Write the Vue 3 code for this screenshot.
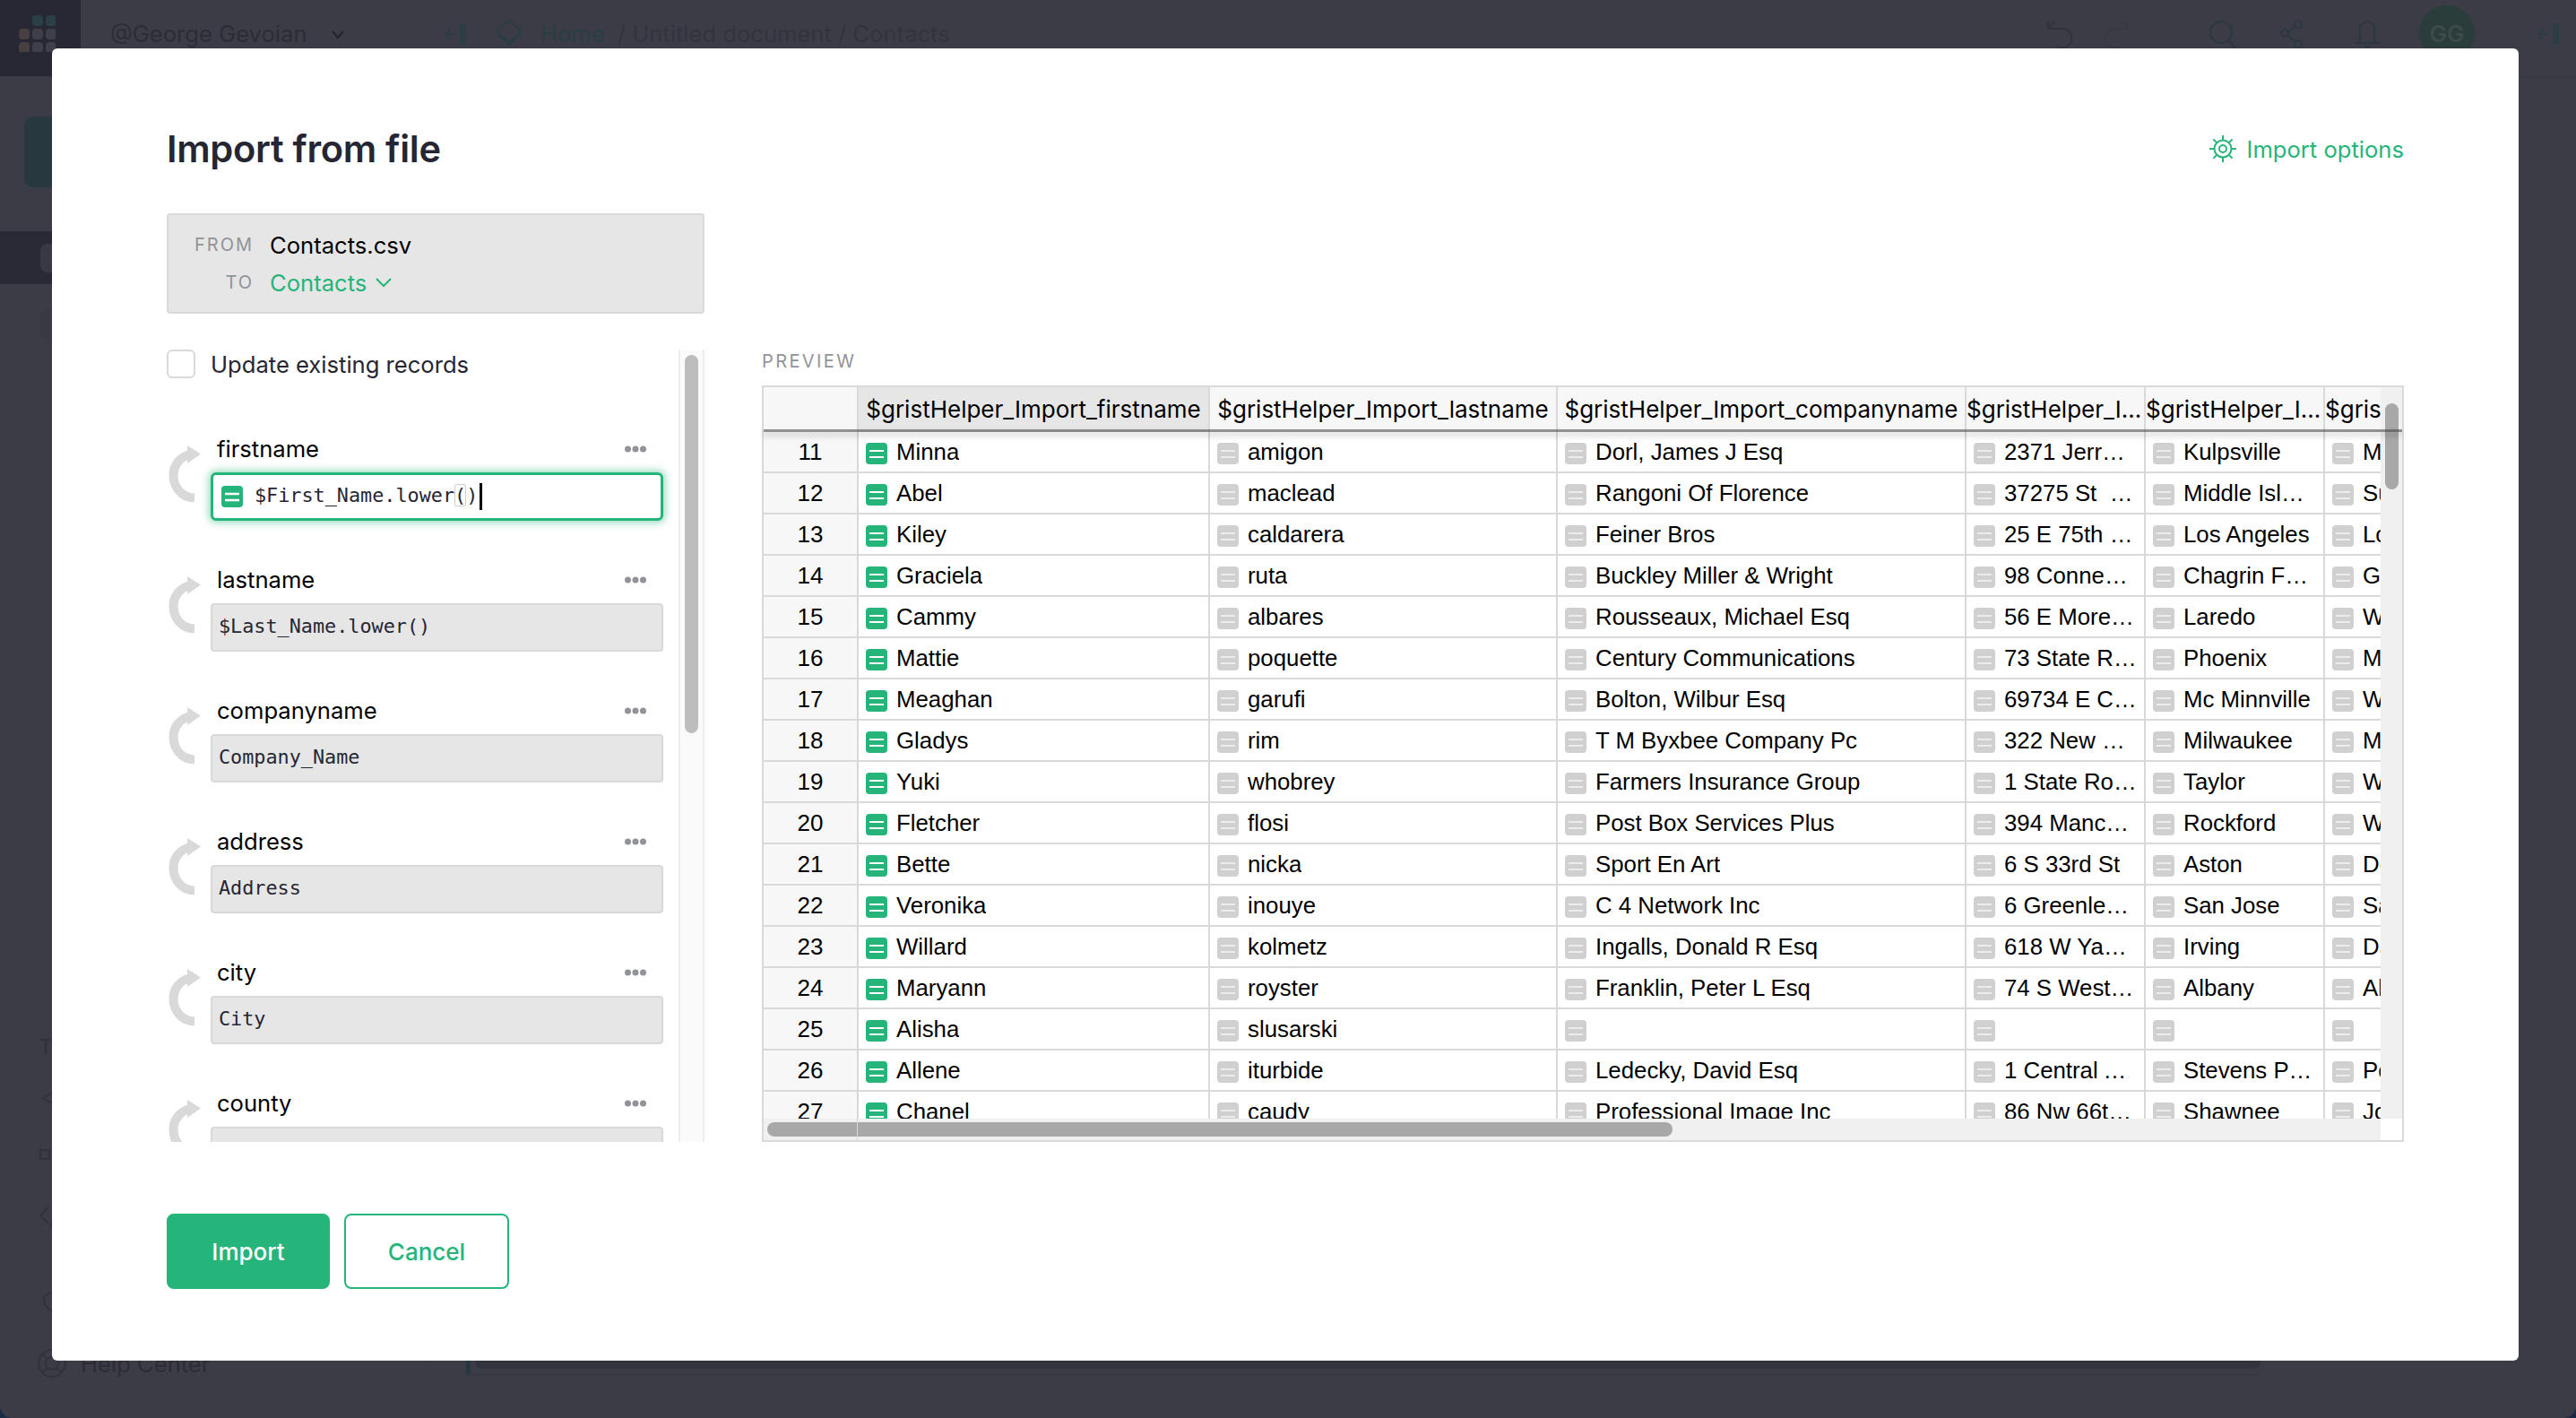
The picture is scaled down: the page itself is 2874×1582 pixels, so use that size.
<script setup>
const fields = [
  { name: 'firstname', formula: '$First_Name.lower()', active: true },
  { name: 'lastname', formula: '$Last_Name.lower()' },
  { name: 'companyname', formula: 'Company_Name' },
  { name: 'address', formula: 'Address' },
  { name: 'city', formula: 'City' },
  { name: 'county', formula: 'County' }
]

const columns = [
  { title: '$gristHelper_Import_firstname', width: 392 },
  { title: '$gristHelper_Import_lastname', width: 388 },
  { title: '$gristHelper_Import_companyname', width: 456 },
  { title: '$gristHelper_Import_address', width: 200 },
  { title: '$gristHelper_Import_city', width: 200 },
  { title: '$gristHelper_Import_county', width: 200 }
]

const rows = [
  ['Minna', 'amigon', 'Dorl, James J Esq', '2371 Jerrold Ave', 'Kulpsville', 'Montgomery'],
  ['Abel', 'maclead', 'Rangoni Of Florence', '37275 St  Rt 17m M', 'Middle Island', 'Suffolk'],
  ['Kiley', 'caldarera', 'Feiner Bros', '25 E 75th St #69', 'Los Angeles', 'Los Angeles'],
  ['Graciela', 'ruta', 'Buckley Miller & Wright', '98 Connecticut Ave Nw', 'Chagrin Falls', 'Geauga'],
  ['Cammy', 'albares', 'Rousseaux, Michael Esq', '56 E Morehead St', 'Laredo', 'Webb'],
  ['Mattie', 'poquette', 'Century Communications', '73 State Road 434 E', 'Phoenix', 'Maricopa'],
  ['Meaghan', 'garufi', 'Bolton, Wilbur Esq', '69734 E Carrillo St', 'Mc Minnville', 'Warren'],
  ['Gladys', 'rim', 'T M Byxbee Company Pc', '322 New Horizon Blvd', 'Milwaukee', 'Milwaukee'],
  ['Yuki', 'whobrey', 'Farmers Insurance Group', '1 State Route 27', 'Taylor', 'Wayne'],
  ['Fletcher', 'flosi', 'Post Box Services Plus', '394 Manchester Blvd', 'Rockford', 'Winnebago'],
  ['Bette', 'nicka', 'Sport En Art', '6 S 33rd St', 'Aston', 'Delaware'],
  ['Veronika', 'inouye', 'C 4 Network Inc', '6 Greenleaf Ave', 'San Jose', 'Santa Clara'],
  ['Willard', 'kolmetz', 'Ingalls, Donald R Esq', '618 W Yakima Ave', 'Irving', 'Dallas'],
  ['Maryann', 'royster', 'Franklin, Peter L Esq', '74 S Westgate St', 'Albany', 'Albany'],
  ['Alisha', 'slusarski', '', '', '', ''],
  ['Allene', 'iturbide', 'Ledecky, David Esq', '1 Central Ave', 'Stevens Point', 'Portage'],
  ['Chanel', 'caudy', 'Professional Image Inc', '86 Nw 66th St #8673', 'Shawnee', 'Johnson']
]
</script>

<template>
  <div class="page">
    <!-- dimmed app behind the dialog -->
    <div class="app-top">
      <div class="logo-cell">
        <svg class="logo" width="41" height="41" viewBox="0 0 41 41">
          <rect x="15" y="0" width="12" height="12" rx="4" fill="#2b3f47" />
          <rect x="30" y="0" width="12" height="12" rx="4" fill="#2b3f47" />
          <rect x="0" y="15" width="12" height="12" rx="4" fill="#473f40" />
          <rect x="15" y="15" width="12" height="12" rx="4" fill="#3f3f4a" />
          <rect x="30" y="15" width="12" height="12" rx="4" fill="#3f3f4a" />
          <rect x="0" y="30" width="12" height="12" rx="4" fill="#473f40" />
          <rect x="15" y="30" width="12" height="12" rx="4" fill="#3f3f4a" />
          <rect x="30" y="30" width="12" height="12" rx="4" fill="#3f3f4a" />
        </svg>
      </div>
      <div class="org">
        <span>@George Gevoian</span>
        <svg width="14" height="10" viewBox="0 0 14 10" fill="none" stroke="#23232c" stroke-width="2"><path d="M1 1l6 7 6-7" /></svg>
      </div>
      <div class="crumbs">
        <svg width="24" height="24" viewBox="0 0 24 24" fill="none" stroke="#2a3d42" stroke-width="2"><path d="M12 12H1M6 6l-5 6 5 6" /><rect x="17" y="0" width="7" height="24" fill="#2a3d42" stroke="none" /></svg>
        <svg class="doc-ico" width="32" height="30" viewBox="0 0 32 30" fill="none" stroke="#2a3d42" stroke-width="2"><path d="M16 1l14 12-14 12L2 13z" /><path d="M4 17l12 11 12-11" /></svg>
        <span class="home">Home</span>
        <span>/ Untitled document / Contacts</span>
      </div>
      <div class="top-tools">
        <svg width="30" height="32" viewBox="0 0 30 32" fill="none" stroke="#32323c" stroke-width="2"><path d="M2 10h16a10 10 0 0 1 0 21h-6M2 10l7-8M2 10v-8" /></svg>
        <svg class="redo" width="28" height="32" viewBox="0 0 28 32" fill="none" stroke="#383841" stroke-width="2"><path d="M26 10H11a10 10 0 0 0 0 21h6M26 10l-7-8M26 10v-8" /></svg>
        <svg class="search" width="32" height="32" viewBox="0 0 32 32" fill="none" stroke="#2c3840" stroke-width="2"><circle cx="14" cy="14" r="12" /><path d="M22 23l8 9" /></svg>
        <svg class="share" width="28" height="32" viewBox="0 0 28 32" fill="none" stroke="#2c3840" stroke-width="2"><circle cx="21" cy="5" r="4" /><circle cx="6" cy="15" r="4" /><circle cx="21" cy="27" r="4" /><path d="M10 13l8-6M10 18l8 7" /></svg>
        <svg class="bell" width="32" height="32" viewBox="0 0 32 32" fill="none" stroke="#2c3840" stroke-width="2"><path d="M8 26V10a8 8 0 0 1 16 0v16M2 26h28M13 30h6" /></svg>
        <div class="avatar">GG</div>
        <svg class="collapse" width="24" height="24" viewBox="0 0 24 24" fill="none" stroke="#2a3d42" stroke-width="2"><path d="M12 12H1M6 6l-5 6 5 6" /><rect x="17" y="0" width="7" height="24" fill="#2a3d42" stroke="none" /></svg>
      </div>
    </div>
    <div class="app-side">
      <div class="new-btn"></div>
      <div class="nav-row selected"><div class="nav-ico"></div></div>
      <div class="nav-row"><div class="nav-ico"></div></div>
      <div class="side-low">
        <svg width="14" height="18" viewBox="0 0 14 18" fill="none" stroke="#32323c" stroke-width="3"><path d="M1 2h12M7 2v16" /></svg>
        <svg class="eye" width="40" height="24" viewBox="0 0 40 24" fill="none" stroke="#32323c" stroke-width="2"><path d="M1 12q14-12 38 0q-24 12-38 0z" /><circle cx="24" cy="12" r="6" /></svg>
        <svg width="34" height="30" viewBox="0 0 34 30" fill="none" stroke="#32323c" stroke-width="2"><rect x="1" y="9" width="10" height="10" /><path d="M16 0v30" /></svg>
        <svg width="34" height="30" viewBox="0 0 34 30" fill="none" stroke="#32323c" stroke-width="2"><path d="M10 6L1 15l9 9M18 2l-6 28" /></svg>
        <svg class="bulb" width="40" height="38" viewBox="0 0 40 38" fill="none" stroke="#32323c" stroke-width="2"><path d="M2 10q16-14 38-2M2 10q0 14 12 16h26" /></svg>
        <div class="help-row">
          <svg width="32" height="40" viewBox="0 0 32 40" fill="none" stroke="#32323c" stroke-width="2"><circle cx="16" cy="20" r="15" /><circle cx="16" cy="20" r="7" /><path d="M5 9l6 6M27 9l-6 6M5 31l6-6M27 31l-6-6" /></svg>
          <span>Help Center</span>
        </div>
      </div>
    </div>
    <div class="app-bottom-band"><span class="band-edge"></span><span class="band"></span></div>

    <!-- dialog -->
    <div class="modal">
      <div class="modal-head">
        <h1 class="title">Import from file</h1>
        <div class="options">
          <svg width="30" height="30" viewBox="0 0 30 30" fill="none" stroke="#25b47a" stroke-width="2">
            <circle cx="15" cy="15" r="9.5" />
            <circle cx="15" cy="15" r="4" />
            <path d="M15 0v5M15 25v5M0 15h5M25 15h5M4.4 4.4l3.5 3.5M22.1 22.1l3.5 3.5M4.4 25.6l3.5-3.5M22.1 7.900l3.500-3.500" />
          </svg>
          <span>Import options</span>
        </div>
      </div>

      <div class="source-box">
        <div class="source-row">
          <span class="source-key">FROM</span>
          <span>Contacts.csv</span>
        </div>
        <div class="source-row">
          <span class="source-key">TO</span>
          <span class="source-target">Contacts</span>
          <svg width="20" height="12" viewBox="0 0 20 12" fill="none" stroke="#25b47a" stroke-width="2"><path d="M2 2l8 8 8-8" /></svg>
        </div>
      </div>

      <div class="body">
        <div class="left-panel">
          <div class="left-scroll">
            <label class="update-row">
              <span class="checkbox"></span>
              <span>Update existing records</span>
            </label>
            <div v-for="field in fields" :key="field.name" class="field">
              <svg class="field-arrow" width="36" height="64" viewBox="0 0 36 64" fill="none">
                <path d="M29 58.500C14 58 5.500 46 5.500 33C5.500 23 12 13 24 10" stroke="#d9d9d9" stroke-width="10" />
                <path d="M21 0L36 9.500L21 20z" fill="#d9d9d9" />
              </svg>
              <div class="field-main">
                <div class="field-head">
                  <span>{{ field.name }}</span>
                  <svg width="24" height="8" viewBox="0 0 24 8" fill="#929299"><circle cx="3.500" cy="4" r="3.500" /><circle cx="12" cy="4" r="3.500" /><circle cx="20.500" cy="4" r="3.500" /></svg>
                </div>
                <div v-if="field.active" class="formula formula-active">
                  <svg class="eq-ico" width="24" height="24" viewBox="0 0 24 24"><rect width="24" height="24" rx="4" fill="#25b47a" /><path d="M4 9h16M4 16h16" stroke="#fff" stroke-width="2.500" /></svg>
                  <span class="code">$First_Name.lower<span class="paren">(</span>)</span><span class="cursor"></span>
                </div>
                <div v-else class="formula code">{{ field.formula }}</div>
              </div>
            </div>
          </div>
          <div class="left-track"><div class="left-thumb"></div></div>
        </div>

        <div class="right-panel">
          <div class="preview-label">PREVIEW</div>
          <div class="grid">
            <div class="grid-view">
              <div class="grid-row head-row">
                <div class="row-num"></div>
                <div
                  v-for="(col, i) in columns"
                  :key="col.title"
                  class="head-cell"
                  :class="{ 'head-active': i === 0 }"
                  :style="{ width: col.width + 'px' }"
                >{{ col.title }}</div>
              </div>
              <div v-for="(row, r) in rows" :key="r" class="grid-row data-row">
                <div class="row-num">{{ r + 11 }}</div>
                <div
                  v-for="(val, i) in row"
                  :key="i"
                  class="cell"
                  :style="{ width: columns[i].width + 'px' }"
                >
                  <svg class="cell-ico" width="24" height="24" viewBox="0 0 24 24">
                    <rect width="24" height="24" rx="4" :fill="i === 0 ? '#25b47a' : '#d0d0d0'" />
                    <path d="M4 9h16M4 16h16" :stroke="i === 0 ? '#fff' : '#ececec'" stroke-width="2" />
                  </svg>
                  <span class="cell-text">{{ val }}</span>
                </div>
              </div>
            </div>
            <div class="v-track"></div>
            <div class="h-track"><div class="h-thumb"></div></div>
            <div class="corner"></div>
            <div class="v-thumb"></div>
            <div class="head-line"></div>
            <div class="num-line"></div>
          </div>
        </div>
      </div>

      <div class="footer">
        <button class="btn btn-primary">Import</button>
        <button class="btn btn-outline">Cancel</button>
      </div>
    </div>
  </div>
</template>

<style>
html, body {
  margin: 0;
  background: #1c2b44;
}
</style>

<style scoped>
.page {
  position: relative;
  width: 2874px;
  height: 1582px;
  overflow: hidden;
  background: #3c3c47;
  border-radius: 0 0 14px 14px;
  font-family: Inter, "Liberation Sans", sans-serif;
  color: #262633;
}

/* dimmed app */
.app-top {
  display: flex;
  height: 86px;
  border-bottom: 1px solid #383842;
  box-sizing: border-box;
  color: #2c2c36;
  font-size: 25.6px;
}
.logo-cell {
  width: 90px;
  background: #282834;
  padding: 17px 0 0 21px;
  box-sizing: border-box;
  overflow: hidden;
}
.logo {
  display: block;
}
.org {
  width: 385px;
  box-sizing: border-box;
  padding: 22px 0 0 33px;
  display: flex;
  align-items: flex-start;
  gap: 27px;
  border-right: 1px solid #393943;
}
.org svg {
  margin-top: 12px;
}
.crumbs {
  display: flex;
  align-items: flex-start;
  padding: 22px 0 0 21px;
  gap: 14px;
  color: #33333e;
}
.crumbs > svg:first-child {
  margin-top: 4px;
}
.doc-ico {
  margin: 0 5px 0 18px;
}
.home {
  color: #2a3d42;
}
.top-tools {
  margin-left: auto;
  display: flex;
  align-items: flex-start;
  padding-top: 22px;
  padding-right: 19px;
}
.redo {
  margin-left: 35px;
}
.search {
  margin-left: 88px;
}
.share {
  margin-left: 47px;
}
.bell {
  margin-left: 54px;
}
.avatar {
  width: 62px;
  height: 62px;
  margin: -16px 0 0 42px;
  border-radius: 50%;
  background: #2a3d3a;
  color: #3e4a4a;
  display: flex;
  align-items: center;
  justify-content: center;
  font-size: 26px;
  font-weight: 600;
}
.collapse {
  margin: 4px 0 0 70px;
}
.app-side {
  display: flex;
  flex-direction: column;
  width: 475px;
  height: 1496px;
  box-sizing: border-box;
  border-right: 1px solid #393943;
  padding-top: 44px;
}
.new-btn {
  width: 200px;
  height: 79px;
  margin-left: 27px;
  border-radius: 10px;
  background: #27393e;
  flex-shrink: 0;
}
.nav-row {
  height: 59px;
  padding: 14px 0 0 45px;
  box-sizing: border-box;
  flex-shrink: 0;
  margin-bottom: 15px;
}
.nav-row.selected {
  margin-top: 49px;
  background: #2a2a36;
}
.nav-ico {
  width: 60px;
  height: 32px;
  border-radius: 8px;
  background: #393943;
}
.side-low {
  display: flex;
  flex-direction: column;
  align-items: flex-start;
  gap: 37px;
  padding: 752px 0 0 44px;
}
.eye {
  margin-left: 3px;
}
.bulb {
  margin: 29px 0 0 3px;
}
.help-row {
  display: flex;
  align-items: center;
  gap: 16px;
  margin: -11px 0 0 -2px;
  color: #2c2c36;
  font-size: 25.6px;
}
.app-bottom-band {
  position: absolute;
  left: 520px;
  top: 1510px;
  width: 2002px;
  height: 23px;
  display: flex;
  border-bottom: 2px solid #383842;
}
.band-edge {
  width: 5px;
  background: #27393e;
}
.band {
  flex: 1;
  margin-left: 5px;
  height: 17px;
  background: #33333e;
  border-radius: 0 0 8px 8px;
}

/* dialog */
.modal {
  position: absolute;
  left: 58px;
  top: 54px;
  width: 2752px;
  height: 1464px;
  box-sizing: border-box;
  padding: 90px 128px 80px;
  background: #fff;
  border-radius: 6px;
  display: flex;
  flex-direction: column;
}
.modal-head {
  display: flex;
  justify-content: space-between;
  align-items: center;
  height: 46px;
}
.title {
  margin: -2px 0 0;
  font-size: 41.6px;
  font-weight: 600;
  letter-spacing: -0.3px;
  color: #262633;
}
.options {
  display: flex;
  align-items: center;
  gap: 12px;
  color: #25b47a;
  font-size: 25.6px;
  padding-bottom: 2px;
}
.source-box {
  margin-top: 48px;
  width: 600px;
  height: 112px;
  box-sizing: border-box;
  background: #e6e6e6;
  border: 2px solid #d9d9d9;
  border-radius: 4px;
  padding: 12px 0 0 29px;
  color: #000;
  font-size: 25.6px;
}
.source-row {
  display: flex;
  align-items: center;
  height: 42px;
}
.source-key {
  width: 66px;
  text-align: right;
  margin-right: 18px;
  font-size: 20px;
  letter-spacing: 2px;
  color: #929299;
}
.source-target {
  color: #25b47a;
  margin-right: 9px;
}
.body {
  display: flex;
  gap: 64px;
  margin-top: 40px;
  height: 884px;
}
.left-panel {
  display: flex;
  width: 600px;
  flex-shrink: 0;
  overflow: hidden;
}
.left-scroll {
  width: 571px;
  flex-shrink: 0;
  height: 884px;
  overflow: hidden;
  padding: 3px 0 0 3px;
  margin: -3px 0 0 -3px;
}
.update-row {
  display: flex;
  align-items: center;
  gap: 17px;
  height: 32px;
  font-size: 25.6px;
  margin-bottom: 61px;
}
.checkbox {
  width: 32px;
  height: 32px;
  box-sizing: border-box;
  border: 2px solid #d9d9d9;
  border-radius: 6px;
  background: #fff;
}
.field {
  position: relative;
  padding-left: 49px;
  padding-right: 17px;
  margin-bottom: 48px;
}
.field-arrow {
  position: absolute;
  left: 2px;
  top: 14px;
}
.field-head {
  height: 36px;
  box-sizing: border-box;
  display: flex;
  align-items: center;
  justify-content: space-between;
  padding: 0 19px 1px 7px;
  font-size: 25.6px;
  color: #000;
  margin-bottom: 8px;
}
.formula {
  height: 54px;
  box-sizing: border-box;
  border: 2px solid #d9d9d9;
  border-radius: 4px;
  background: #e6e6e6;
  padding: 0 7px 4px;
  display: flex;
  align-items: center;
}
.code {
  font-family: "DejaVu Sans Mono", "Liberation Mono", monospace;
  font-size: 21.8px;
  color: #262633;
}
.formula-active {
  background: #fff;
  border: 3px solid #25b47a;
  box-shadow: 0 0 8px 2px rgba(37, 180, 122, 0.5);
  border-radius: 6px;
  padding: 0 9px 3px;
}
.eq-ico {
  margin: 3px 13px 0 0;
  flex-shrink: 0;
}
.paren {
  box-shadow: inset 0 0 0 1px #cfcfcf;
  border-radius: 3px;
}
.cursor {
  width: 3px;
  height: 30px;
  margin: 2px 0 0 2px;
  background: #000;
}
.left-track {
  width: 29px;
  box-sizing: border-box;
  background: #fafafa;
  border-left: 2px solid #ededed;
  border-right: 2px solid #ededed;
  padding: 6px 5px 0;
}
.left-thumb {
  height: 422px;
  background: #bdbdbd;
  border-radius: 8px;
}
.right-panel {
  width: 1832px;
  flex-shrink: 0;
}
.preview-label {
  height: 40px;
  line-height: 26px;
  font-size: 20px;
  letter-spacing: 2.4px;
  color: #929299;
}
.grid {
  position: relative;
  display: grid;
  grid-template-columns: 1804px 24px;
  grid-template-rows: 816px 24px;
  width: 1832px;
  height: 844px;
  box-sizing: border-box;
  border: 2px solid #d9d9d9;
  color: #000;
}
.grid-view {
  overflow: hidden;
}
.grid-row {
  display: flex;
  width: 2300px;
}
.head-row {
  height: 50px;
}
.row-num {
  width: 104px;
  flex-shrink: 0;
  box-sizing: content-box;
  background: #f7f7f7;
  border-right: 2px solid #d9d9d9;
  text-align: center;
  font-family: "Liberation Sans", sans-serif;
  font-size: 26px;
  line-height: 44px;
}
.head-cell {
  flex-shrink: 0;
  box-sizing: border-box;
  padding: 0;
  background: #f7f7f7;
  border-right: 2px solid #d9d9d9;
  font-family: Inter, sans-serif;
  font-size: 26px;
  line-height: 50px;
  text-align: center;
  white-space: nowrap;
  overflow: hidden;
  text-overflow: ellipsis;
}
.head-active {
  background: #e6e6e6;
}
.data-row {
  height: 46px;
  border-bottom: 2px solid #d9d9d9;
  box-sizing: border-box;
}
.cell {
  flex-shrink: 0;
  box-sizing: border-box;
  display: flex;
  align-items: flex-start;
  padding: 0 7.5px 0 8px;
  border-right: 2px solid #d9d9d9;
  background: #fff;
  font-family: "Liberation Sans", sans-serif;
  font-size: 25.8px;
  line-height: 45px;
  min-width: 0;
}
.cell-ico {
  flex-shrink: 0;
  margin: 12px 10px 0 0;
}
.cell-text {
  min-width: 0;
  white-space: pre;
  overflow: hidden;
  text-overflow: ellipsis;
}
.v-track {
  background: #f0f0f0;
}
.h-track {
  background: #f0f0f0;
  padding: 4px;
  box-sizing: border-box;
}
.h-thumb {
  width: 1010px;
  height: 16px;
  background: #a8a8a8;
  border-radius: 8px;
}
.corner {
  background: #fff;
}
.v-thumb {
  position: absolute;
  left: 1809px;
  top: 18px;
  width: 15px;
  height: 96px;
  background: #a8a8a8;
  border-radius: 8px;
}
.head-line {
  position: absolute;
  left: 0;
  top: 47px;
  width: 1828px;
  height: 3px;
  background: rgba(60, 60, 60, 0.55);
  box-shadow: 0 4px 6px rgba(0, 0, 0, 0.22);
}
.num-line {
  position: absolute;
  left: 104px;
  top: 816px;
  width: 1px;
  height: 24px;
  background: #d9d9d9;
}
.footer {
  display: flex;
  gap: 16px;
  margin-top: 80px;
}
.btn {
  width: 182px;
  height: 84px;
  box-sizing: border-box;
  border-radius: 8px;
  font-family: Inter, sans-serif;
  font-size: 26px;
  font-weight: 500;
  padding: 0;
}
.btn-primary {
  background: #25b47a;
  border: 2px solid #25b47a;
  color: #fff;
}
.btn-outline {
  width: 184px;
  background: #fff;
  border: 2px solid #25b47a;
  color: #25b47a;
}
</style>
